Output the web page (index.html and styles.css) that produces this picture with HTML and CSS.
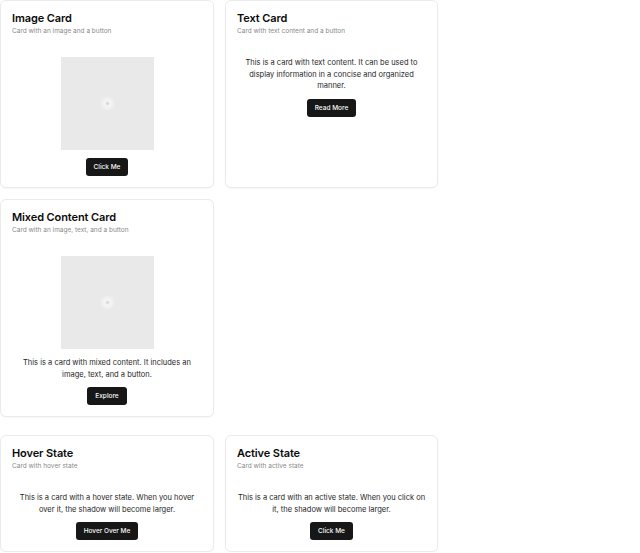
FILE: index.html
```html
<!DOCTYPE html>
<html lang="en">

<head>
  <meta charset="UTF-8">
  <meta name="viewport" content="width=device-width, initial-scale=1.0">
  <link rel="stylesheet" href="styles.css">
  <title>Cards</title>
</head>

<body>

  <div id="page">
    <div class="card-grid">
      <div class="card">
        <div class="card-header">
          <h3 class="card-title">Image Card</h3>
          <p class="card-desc">Card with an image and a button</p>
        </div>
        <div class="card-content">
          <div class="placeholder"></div>
          <button class="btn">Click Me</button>
        </div>
      </div>

      <div class="card">
        <div class="card-header">
          <h3 class="card-title">Text Card</h3>
          <p class="card-desc">Card with text content and a button</p>
        </div>
        <div class="card-content">
          <p class="card-text">This is a card with text content. It can be used to display information in a concise and organized manner.</p>
          <button class="btn">Read More</button>
        </div>
      </div>

      <div class="card">
        <div class="card-header">
          <h3 class="card-title">Mixed Content Card</h3>
          <p class="card-desc">Card with an image, text, and a button</p>
        </div>
        <div class="card-content">
          <div class="placeholder"></div>
          <p class="card-text">This is a card with mixed content. It includes an image, text, and a button.</p>
          <button class="btn">Explore</button>
        </div>
      </div>
    </div>

    <div class="card-grid">
      <div class="card hover-card">
        <div class="card-header">
          <h3 class="card-title">Hover State</h3>
          <p class="card-desc">Card with hover state</p>
        </div>
        <div class="card-content">
          <p class="card-text">This is a card with a hover state. When you hover over it, the shadow will become larger.</p>
          <button class="btn">Hover Over Me</button>
        </div>
      </div>

      <div class="card active-card">
        <div class="card-header">
          <h3 class="card-title">Active State</h3>
          <p class="card-desc">Card with active state</p>
        </div>
        <div class="card-content">
          <p class="card-text">This is a card with an active state. When you click on it, the shadow will become larger.</p>
          <button class="btn">Click Me</button>
        </div>
      </div>
    </div>
  </div>

</body>

</html>
```

FILE: styles.css
```css
body {
  margin: 0;
  background-color: #fff;
  font-family: 'Inter', 'Liberation Sans', sans-serif;
  color: #0a0a0a;
}

#page {
  display: flex;
  flex-direction: column;
  gap: 18px;
}

.card-grid {
  display: grid;
  grid-template-columns: 214px 213px;
  column-gap: 11px;
  row-gap: 11px;
}

.card {
  background-color: #fff;
  border: 1px solid #ebebeb;
  border-radius: 6px;
  box-shadow: 0 1px 2px rgba(0, 0, 0, 0.04);
  transition: box-shadow 0.2s ease-in-out;
}

.hover-card:hover,
.active-card:active {
  box-shadow: 0 6px 12px rgba(0, 0, 0, 0.1);
}

.card-header {
  padding: 11px 11px 0;
}

.card-title {
  margin: 0;
  font-size: 11px;
  line-height: 12px;
  font-weight: 600;
  letter-spacing: -0.1px;
}

.card-desc {
  margin: 2px 0 0;
  font-size: 6.5px;
  line-height: 10px;
  color: #8a8a8a;
}

.card-content {
  padding: 21px 11px 11px;
  display: flex;
  flex-direction: column;
  align-items: center;
  gap: 7px;
}

.placeholder {
  width: 93px;
  height: 93px;
  margin-bottom: 1px;
  background: radial-gradient(circle, #cfcfcf 0, #dedede 1px, #f6f6f6 2.5px, #f0f0f0 5px, #e9e9e9 8px);
}

.card-text {
  margin: 0;
  font-size: 7.5px;
  line-height: 11.5px;
  text-align: center;
  color: #262626;
}

.btn {
  height: 18px;
  padding: 0 8px;
  border: none;
  border-radius: 3px;
  background-color: #171717;
  color: #fafafa;
  font-family: inherit;
  font-size: 6.5px;
  font-weight: 500;
  cursor: pointer;
}
```
